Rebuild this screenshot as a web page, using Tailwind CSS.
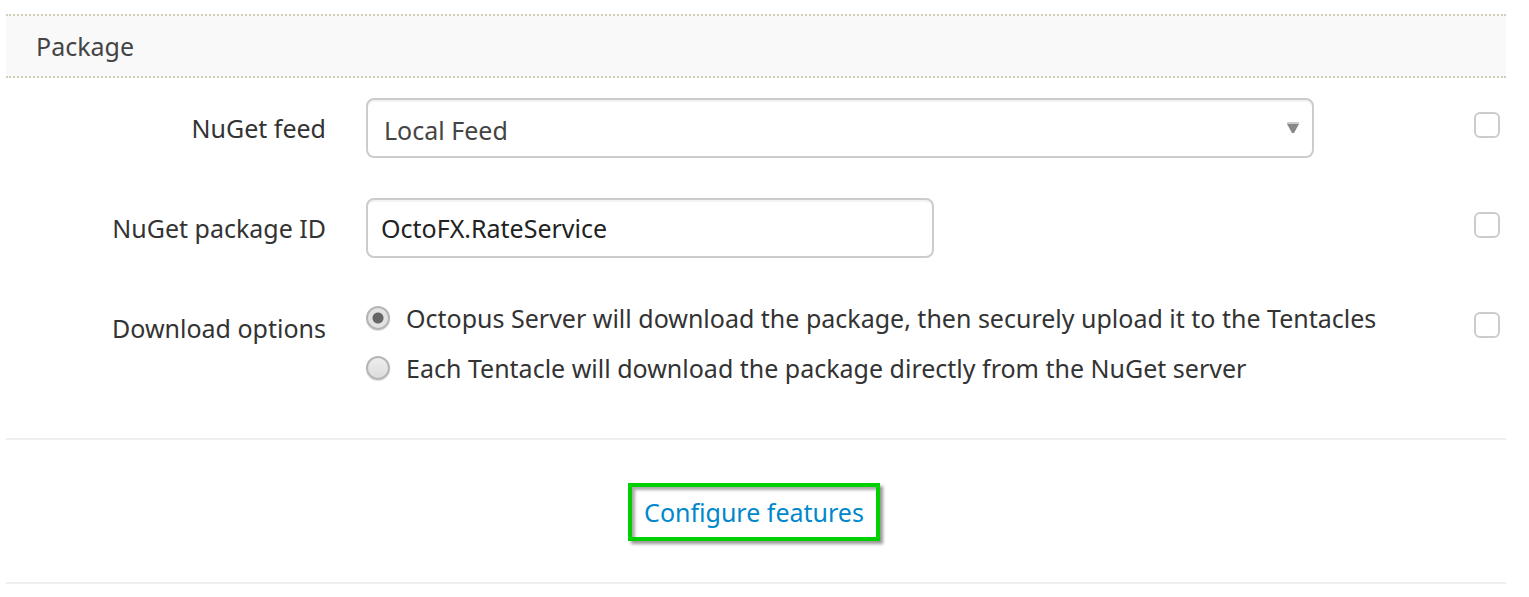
<!DOCTYPE html>
<html lang="en">
<head>
<meta charset="utf-8">
<meta name="viewport" content="width=device-width, initial-scale=1">
<title>Package</title>
<script src="https://cdn.jsdelivr.net/npm/@tailwindcss/browser@4"></script>
</head>
<body class="bg-white font-['Noto_Sans',sans-serif] text-[25px] leading-[36px] text-[#333]">
<main class="pl-[6px] pr-[23px] pt-[14px]">
  <h1 class="border-y-2 border-dotted border-[#d3ceb8] bg-[#f9f9f9] px-[30px] py-[12px] text-[#444]">Package</h1>
  <form class="flex flex-col gap-[40px] border-b-2 border-[#eee] pt-[20px] pb-[52px]">
    <div class="flex items-start gap-[40px]">
      <label for="feed" class="w-[320px] shrink-0 pt-[12px] text-right">NuGet feed</label>
      <div class="relative w-full max-w-[948px]">
        <select id="feed" class="h-[60px] w-full appearance-none rounded-[8px] border-2 border-[#ccc] bg-white px-[16px] pt-[3px] text-[#444] inset-shadow-[0_2px_0_#f3f3f3]"><option>Local Feed</option></select>
        <svg class="pointer-events-none absolute right-[15px] top-[24px]" width="12" height="11" viewBox="0 0 12 11"><path d="M0 0h12v2H0z" fill="#ccc"/><path d="M0 2h12L7 11H5z" fill="#888"/></svg>
      </div>
      <input type="checkbox" aria-label="Bind NuGet feed" class="mt-[14px] mr-[6px] ml-auto size-[26px] shrink-0 appearance-none rounded-[6px] border-2 border-[#ccc] bg-white checked:bg-[#ccc]">
    </div>
    <div class="flex items-start gap-[40px]">
      <label for="pkg" class="w-[320px] shrink-0 pt-[12px] text-right">NuGet package ID</label>
      <input id="pkg" type="text" value="OctoFX.RateService" class="h-[60px] w-full max-w-[568px] rounded-[8px] border-2 border-[#ccc] bg-white px-[13px] text-[#222] inset-shadow-[0_2px_0_#f3f3f3]">
      <input type="checkbox" aria-label="Bind NuGet package ID" class="mt-[14px] mr-[6px] ml-auto size-[26px] shrink-0 appearance-none rounded-[6px] border-2 border-[#ccc] bg-white checked:bg-[#ccc]">
    </div>
    <div role="radiogroup" aria-labelledby="download" class="flex items-start gap-[40px]">
      <span id="download" class="w-[320px] shrink-0 pt-[12px] text-right">Download options</span>
      <div class="flex flex-col gap-[14px] pt-[2px]">
        <label class="flex items-center gap-[16px]"><input type="radio" name="download" checked class="size-[24px] shrink-0 appearance-none rounded-full border-2 border-[#b5b5b5] bg-linear-to-b from-[#eee] to-[#dcdcdc] shadow-[0_1px_1px_#ddd] checked:bg-[radial-gradient(circle,#666_0_5px,#e2e2e2_6px)]">Octopus Server will download the package, then securely upload it to the Tentacles</label>
        <label class="flex items-center gap-[16px]"><input type="radio" name="download" class="size-[24px] shrink-0 appearance-none rounded-full border-2 border-[#b5b5b5] bg-linear-to-b from-[#eee] to-[#dcdcdc] shadow-[0_1px_1px_#ddd] checked:bg-[radial-gradient(circle,#666_0_5px,#e2e2e2_6px)]">Each Tentacle will download the package directly from the NuGet server</label>
      </div>
      <input type="checkbox" aria-label="Bind download options" class="mt-[14px] mr-[6px] ml-auto size-[26px] shrink-0 appearance-none rounded-[6px] border-2 border-[#ccc] bg-white checked:bg-[#ccc]">
    </div>
  </form>
  <div class="flex justify-center border-b-2 border-[#eee] pt-[43px] pr-[4px] pb-[41px]">
    <a href="#" class="border-4 border-[#00cf00] px-[12px] py-[7px] text-[#0088cc] shadow-[3px_3px_3px_#999] inset-shadow-[3px_3px_3px_#aaa]">Configure features</a>
  </div>
</main>
</body>
</html>
